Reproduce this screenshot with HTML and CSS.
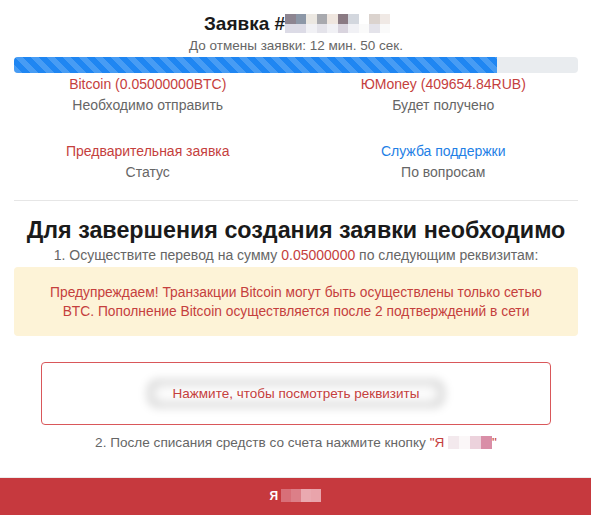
FILE: index.html
```html
<!DOCTYPE html>
<html lang="ru">
<head>
  <meta charset="UTF-8" />
  <meta name="viewport" content="width=device-width, initial-scale=1.0"/>
  <title>Заявка</title>
  <link rel="stylesheet" href="styles.css">
</head>
<body>

<div class="container">
  <h1 class="order-title">Заявка #<span class="mosaic mosaic-title">
    <i class="t1"></i><i class="t2"></i><i class="t3"></i><i class="t4"></i><i class="t5"></i><i class="t6"></i><i class="t7"></i><i class="t8"></i><i class="t9"></i><i class="t10"></i>
    <i class="b1"></i><i class="b1"></i><i class="b2"></i><i class="b3"></i><i class="b2"></i><i class="b4"></i><i class="b2"></i><i class="b5"></i><i class="b3"></i><i class="b5"></i>
  </span></h1>
  <div class="timer">До отмены заявки: 12 мин. 50 сек.</div>

  <div class="progress">
    <div class="progress-bar" style="width: 85.6%"></div>
  </div>
</div>

<div class="info">
  <div class="info-item">
    <div class="info-value">Bitcoin (0.05000000BTC)</div>
    <div class="info-label">Необходимо отправить</div>
  </div>
  <div class="info-item">
    <div class="info-value">ЮMoney (409654.84RUB)</div>
    <div class="info-label">Будет получено</div>
  </div>
  <div class="info-item">
    <div class="info-value">Предварительная заявка</div>
    <div class="info-label">Статус</div>
  </div>
  <div class="info-item">
    <div class="info-value link">Служба поддержки</div>
    <div class="info-label">По вопросам</div>
  </div>
</div>

<div class="container">
  <hr class="divider">

  <h2 class="steps-title">Для завершения создания заявки необходимо</h2>
  <p class="step">1. Осуществите перевод на сумму <span class="accent">0.05000000</span> по следующим реквизитам:</p>

  <div class="warning">
    Предупреждаем! Транзакции Bitcoin могут быть осуществлены только сетью BTC. Пополнение Bitcoin осуществляется после 2 подтверждений в сети
  </div>

  <div class="details">
    <span class="details-text">Нажмите, чтобы посмотреть реквизиты</span>
  </div>

  <p class="step step-two">2. После списания средств со счета нажмите кнопку <span class="accent">"Я <span class="mosaic mosaic-quote"><i class="q1"></i><i class="q2"></i><i class="q3"></i><i class="q4"></i></span>"</span></p>
</div>

<div class="footer">
  <button type="button" class="paid-btn">Я <span class="mosaic mosaic-btn"><i class="p1"></i><i class="p2"></i><i class="p3"></i><i class="p4"></i></span></button>
</div>

</body>
</html>
```

FILE: styles.css
```css
body {
  font-family: "Liberation Sans", Arial, sans-serif;
  background-color: #fff;
  margin: 0;
  padding: 0;
  color: #666;
}

.container {
  padding: 0 13px 0 14px;
}

.order-title {
  margin: 14px 0 0;
  font-size: 19px;
  line-height: 20px;
  font-weight: bold;
  color: #1a1a1a;
  text-align: center;
  padding-left: 2px;
}

.mosaic {
  display: inline-grid;
  vertical-align: middle;
}

.mosaic i {
  display: block;
}

.mosaic-title {
  grid-template-columns: repeat(10, 10.5px);
  grid-template-rows: 10px 9px;
  margin-top: -3px;
}

.t1 { background: #8d8591; }
.t2 { background: #8c97a7; }
.t3 { background: #ece8e2; }
.t4 { background: #a8a9ae; }
.t5 { background: #efe6df; }
.t6 { background: #8a7a83; }
.t7 { background: #d3d7de; }
.t8 { background: #fff; }
.t9 { background: #dbd3ce; }
.t10 { background: #f0e9e5; }
.b1 { background: #dcdbe6; }
.b2 { background: #f1f1f5; }
.b3 { background: #e4e3ea; }
.b4 { background: #d9d4de; }
.b5 { background: #fafafa; }

.timer {
  margin-top: 4px;
  font-size: 13.5px;
  line-height: 16px;
  text-align: center;
}

.progress {
  margin-top: 3px;
  height: 16px;
  background-color: #e9ecef;
  border-radius: 4px;
  overflow: hidden;
}

.progress-bar {
  height: 100%;
  background-color: #1f86f2;
  background-image: linear-gradient(45deg, rgba(255,255,255,.18) 25%, transparent 25%, transparent 50%, rgba(255,255,255,.18) 50%, rgba(255,255,255,.18) 75%, transparent 75%, transparent);
  background-size: 16px 16px;
}

.info {
  display: grid;
  grid-template-columns: 1fr 1fr;
  row-gap: 25px;
  margin-top: 1px;
  text-align: center;
  font-size: 14px;
  line-height: 21px;
}

.info-value {
  color: #c5403d;
}

.info-value.link {
  color: #1f7fe6;
}

.divider {
  margin: 17px 0 0;
  border: none;
  border-top: 1px solid #e6e6e6;
}

.steps-title {
  margin: 16px 0 0;
  font-size: 23.3px;
  line-height: 26px;
  color: #1a1a1a;
  text-align: center;
}

.step {
  margin: 3px 0 0;
  font-size: 14px;
  line-height: 18px;
  text-align: center;
}

.accent {
  color: #c5403d;
}

.warning {
  margin-top: 3px;
  padding: 16px 30px 15px;
  background-color: #fdf3d7;
  border-radius: 4px;
  color: #c5403d;
  font-size: 13.8px;
  line-height: 19px;
  text-align: center;
}

.details {
  margin: 26px 27px 0;
  padding: 20px 0;
  border: 1px solid #d9575a;
  border-radius: 4px;
  text-align: center;
  font-size: 13.5px;
  line-height: 21px;
  color: #c5403d;
}

.details-text {
  position: relative;
  display: inline-block;
  padding: 0 26px;
}

.details-text::before {
  content: "";
  position: absolute;
  left: 0;
  right: 0;
  top: -4px;
  bottom: -4px;
  z-index: -1;
  border-radius: 12px;
  box-shadow: inset 0 0 10px 4px rgba(0, 0, 0, 0.22);
  filter: blur(4px);
}

.step-two {
  margin-top: 9px;
  font-size: 13.6px;
}

.mosaic-quote {
  grid-template-columns: 11px 11px 11px 11px;
  grid-template-rows: 13px;
  margin-top: -2px;
}

.q1 { background: #f3e9ed; }
.q2 { background: #fbf7f8; }
.q3 { background: #ecd2dc; }
.q4 { background: #d98ea7; }

.footer {
  margin-top: 25px;
  border-top: 1px solid #ececec;
}

.paid-btn {
  display: block;
  width: 100%;
  height: 40px;
  border: none;
  background-color: #c6393e;
  color: #fff;
  font-family: inherit;
  font-size: 12px;
  font-weight: bold;
  cursor: pointer;
  padding: 0 0 4px;
}

.mosaic-btn {
  grid-template-columns: 10px 10px 10px 10px;
  grid-template-rows: 13px;
  margin-top: -2px;
}

.p1 { background: #d86f78; }
.p2 { background: #dc7f88; }
.p3 { background: #eaa9b0; }
.p4 { background: #e9a4ab; }
```
